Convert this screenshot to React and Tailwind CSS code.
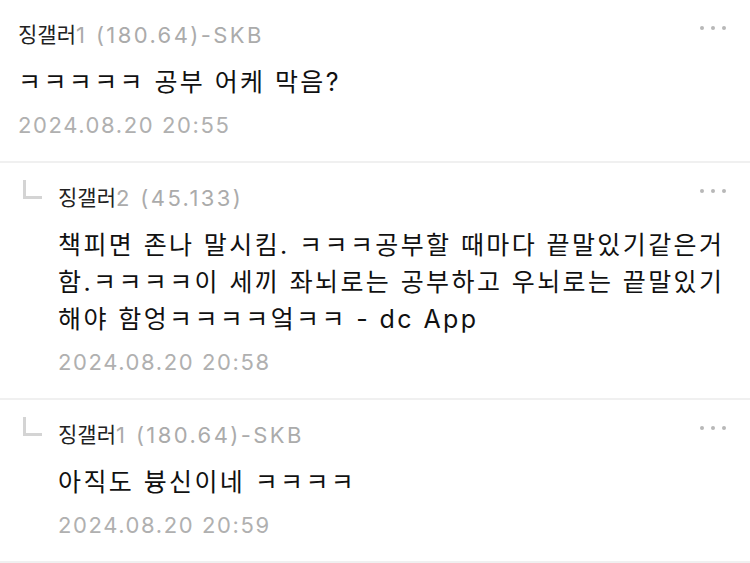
import React from 'react';

const comments = [
    {
        id: 1,
        reply: false,
        nick: '징갤러',
        meta: '1 (180.64)-SKB',
        lines: ['ㅋㅋㅋㅋㅋ 공부 어케 막음?'],
        date: '2024.08.20 20:55',
    },
    {
        id: 2,
        reply: true,
        nick: '징갤러',
        meta: '2 (45.133)',
        lines: [
            '책피면 존나 말시킴. ㅋㅋㅋ공부할 때마다 끝말있기같은거',
            '함.ㅋㅋㅋㅋ이 세끼 좌뇌로는 공부하고 우뇌로는 끝말있기',
            '해야 함엉ㅋㅋㅋㅋ엌ㅋㅋ - dc App',
        ],
        date: '2024.08.20 20:58',
    },
    {
        id: 3,
        reply: true,
        nick: '징갤러',
        meta: '1 (180.64)-SKB',
        lines: ['아직도 븅신이네 ㅋㅋㅋㅋ'],
        date: '2024.08.20 20:59',
    },
];

const MoreDots = () => (
    <div className="flex items-center gap-[7px] pt-[6px]">
        <span className="w-[4px] h-[4px] rounded-full bg-[#b8b8b8]" />
        <span className="w-[4px] h-[4px] rounded-full bg-[#b8b8b8]" />
        <span className="w-[4px] h-[4px] rounded-full bg-[#b8b8b8]" />
    </div>
);

const ReplyMark = () => (
    <svg className="absolute left-[23px] top-[17px]" width="20" height="20" viewBox="0 0 20 20">
        <path d="M1.5 0 V17.5 H19" fill="none" stroke="#d4d4d4" strokeWidth="3" />
    </svg>
);

const Comment = ({ c }) => (
    <div className={`relative border-b-2 border-[#f0f0f0] pt-5 pb-[21px] pr-[24px] ${c.reply ? 'pl-[58px]' : 'pl-[18px]'}`}>
        {c.reply && <ReplyMark />}
        <div className="flex justify-between items-start h-[30px]">
            <div className="h-[30px] flex items-center whitespace-nowrap">
                <span className="text-[21px] leading-[30px] text-[#222]">{c.nick}</span>
                <span className="text-[22px] leading-[30px] tracking-[2.4px] text-[#ababab]">{c.meta}</span>
            </div>
            <MoreDots />
        </div>
        <div className="mt-[14px] text-[25px] tracking-[2.4px] text-[#111] whitespace-nowrap">
            {c.lines.map((l, i) => (
                <div key={i} className="h-[37px] leading-[37px]">{l}</div>
            ))}
        </div>
        <div className="mt-[9px] h-[30px] text-[22px] leading-[30px] text-[#b0b0b0] tracking-[1.6px]">{c.date}</div>
    </div>
);

export default function App() {
    return (
        <div className="w-[750px] h-[563px] bg-white overflow-hidden" style={{ fontFamily: 'Inter, "Noto Sans CJK KR", sans-serif' }}>
            {comments.map((c) => (
                <Comment key={c.id} c={c} />
            ))}
        </div>
    );
}
